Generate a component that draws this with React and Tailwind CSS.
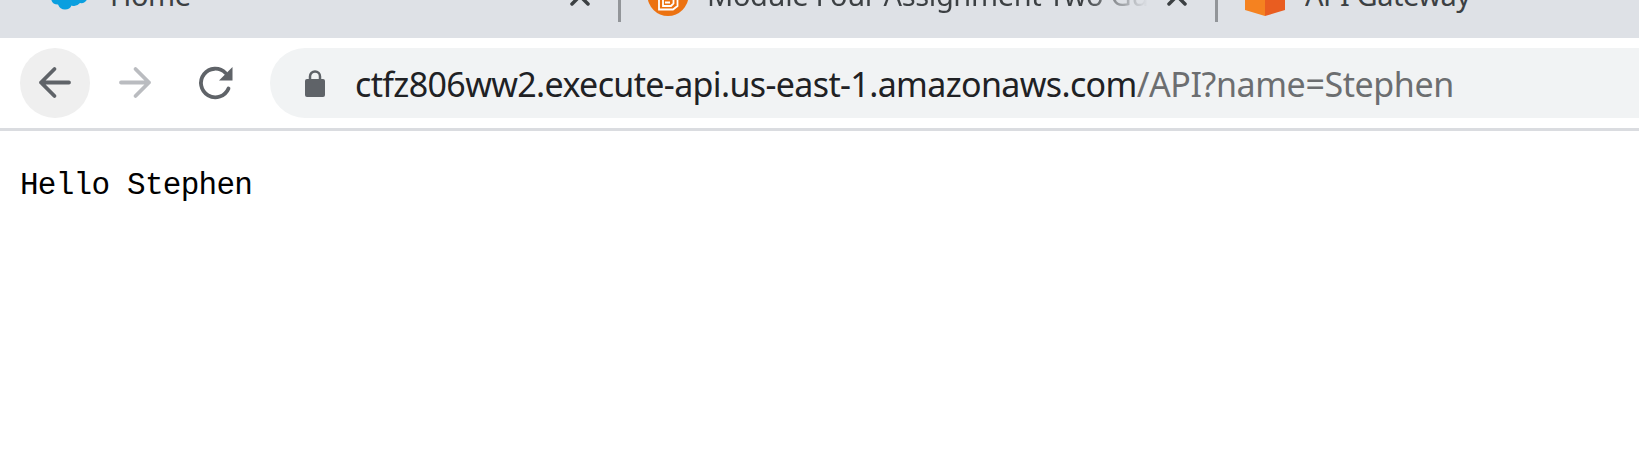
const CloseIcon = () => (
  <svg className="h-[7px] w-6 shrink-0" viewBox="0 0 24 7">
    <path d="M4 4L12 -4L20 4" fill="none" stroke="#3c4043" strokeWidth="3.5" strokeLinecap="round" />
  </svg>
);

const CloudIcon = () => (
  <svg className="h-[12px] w-10 shrink-0" viewBox="0 0 40 12">
    <path d="M1 -3Q1 4.500 8 4.500Q10 9.500 15 9.500Q20 9.500 21.500 5.500Q26 7.500 30 3Q36 4 38 -3Z" fill="#0a9fdf" />
  </svg>
);

const CourseIcon = () => (
  <svg className="h-[17px] w-10 shrink-0" viewBox="0 0 40 17">
    <circle cx="20" cy="-4.500" r="20.500" fill="#ec7211" />
    <path d="M11 0V9.500H25L29.500 6V0M15 0V6H23L25.500 3.500V0M17 2.500H22" fill="none" stroke="#fff" strokeWidth="1.800" />
  </svg>
);

const CubeIcon = () => (
  <svg className="h-[17px] w-10 shrink-0" viewBox="0 0 40 17">
    <path d="M0 0H20V16L0 10Z" fill="#f58220" />
    <path d="M20 0H40V10L20 16Z" fill="#e95d20" />
  </svg>
);

const Title = ({ children, className }) => (
  <span className={"-mt-[25px] h-12 overflow-hidden whitespace-nowrap text-[29px] leading-[40px] " + className}>{children}</span>
);

const Separator = () => <div className="h-[22px] w-[3px] shrink-0 bg-[#929599]" />;

export default function App() {
  return (
    <div className="h-[471px] w-[1639px] overflow-hidden bg-white font-['Noto_Sans',sans-serif]">
      <header>
        <div className="flex h-[38px] items-start overflow-hidden bg-[#dee1e6] text-[#3c4043]">
          <div className="flex w-[618px] shrink-0 items-start pl-[50px]">
            <CloudIcon />
            <Title className="ml-5 w-[458px] tracking-[-0.500px]">Home</Title>
            <CloseIcon />
          </div>
          <Separator />
          <div className="flex w-[594px] shrink-0 items-start pl-[27px]">
            <CourseIcon />
            <Title className="ml-[19px] mr-[17px] w-[441px] bg-linear-to-r from-[#3c4043] from-85% to-transparent to-100% bg-clip-text tracking-[-0.370px] text-transparent">Module Four Assignment Two Guidelines</Title>
            <CloseIcon />
          </div>
          <Separator />
          <div className="flex items-start pl-[27px]">
            <CubeIcon />
            <Title className="ml-5 tracking-[-0.480px]">API Gateway</Title>
          </div>
        </div>
        <div className="flex h-[93px] items-center border-b-[3px] border-[#dadce0] pl-5">
          <div className="size-[70px] rounded-full bg-[#efefef]">
            <svg className="size-[70px]" viewBox="0 0 70 70" fill="none" stroke="#5f6368" strokeWidth="3.800" strokeLinecap="round" strokeLinejoin="round">
              <path d="M49 34.500H21M34.500 21L21 34.500L34.500 48" />
            </svg>
          </div>
          <svg className="ml-2.5 size-[70px]" viewBox="0 0 70 70" fill="none" stroke="#babcc0" strokeWidth="3.800" strokeLinecap="round" strokeLinejoin="round">
            <path d="M21 34.500H49M35.500 21L49 34.500L35.500 48" />
          </svg>
          <svg className="ml-2.5 size-[70px]" viewBox="0 0 70 70">
            <path d="M48.500 40.500A14.300 14.300 0 1 1 45.500 25" fill="none" stroke="#5f6368" strokeWidth="3.800" strokeLinecap="round" />
            <path d="M52.500 19V32.500H39Z" fill="#5f6368" />
          </svg>
          <div className="ml-5 flex h-[70px] flex-1 items-center rounded-l-full bg-[#f1f3f4] pl-[35px]">
            <svg className="h-[27px] w-5" viewBox="0 0 20 27">
              <rect y="9" width="20" height="18" rx="2" fill="#5f6368" />
              <path d="M5 10V6.500A5 5 0 0 1 15 6.500V10" fill="none" stroke="#5f6368" strokeWidth="2.500" />
            </svg>
            <div className="ml-[30px] flex whitespace-nowrap pt-px text-[34px] leading-[48px] text-[#202124]">
              <span className="tracking-[-0.640px]">ctfz806ww2.execute-api.us-east-1.amazonaws.com</span>
              <span className="tracking-[-0.400px] text-[#6c6e70]">/API?name=Stephen</span>
            </div>
          </div>
        </div>
      </header>
      <pre className="pl-5 pt-[35px] font-['Liberation_Mono',monospace] text-[31px] leading-[40px] tracking-[-0.750px] text-black">Hello Stephen</pre>
    </div>
  );
}
